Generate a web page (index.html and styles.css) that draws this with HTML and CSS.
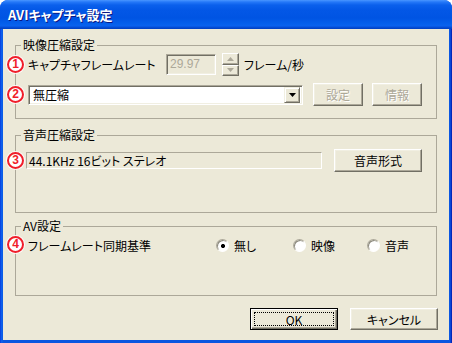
FILE: index.html
```html
<!DOCTYPE html>
<html lang="ja">
<head>
<meta charset="utf-8">
<title>AVIキャプチャ設定</title>
<link rel="stylesheet" href="styles.css">
</head>
<body>
<div class="window">
  <div class="titlebar"><span class="title">AVIキャプチャ設定</span></div>
  <div class="client">
    <fieldset class="group g1">
      <legend>映像圧縮設定</legend>
      <div class="row row1">
        <span class="mark">1</span>
        <span class="lbl-rate">キャプチャフレームレート</span>
        <div class="edit">29.97</div>
        <div class="spin">
          <div class="spin-btn"><svg width="7" height="4" viewBox="0 0 7 4"><path d="M3.5 0L7 4H0z" fill="#ACA899"/></svg></div>
          <div class="spin-btn"><svg width="7" height="4" viewBox="0 0 7 4"><path d="M0 0H7L3.5 4z" fill="#ACA899"/></svg></div>
        </div>
        <span class="unit">フレーム/秒</span>
      </div>
      <div class="row row2">
        <span class="mark">2</span>
        <div class="combo">
          <span class="combo-text">無圧縮</span>
          <span class="combo-btn"><svg width="7" height="4" viewBox="0 0 7 4"><path d="M0 0H7L3.5 4z" fill="#000"/></svg></span>
        </div>
        <button class="btn disabled b-set">設定</button>
        <button class="btn disabled b-info">情報</button>
      </div>
    </fieldset>

    <fieldset class="group g2">
      <legend>音声圧縮設定</legend>
      <div class="row row3">
        <span class="mark">3</span>
        <div class="static">44.1KHz 16ビット ステレオ</div>
        <button class="btn b-format">音声形式</button>
      </div>
    </fieldset>

    <fieldset class="group g3">
      <legend>AV設定</legend>
      <div class="row row4">
        <span class="mark">4</span>
        <span class="lbl-sync">フレームレート同期基準</span>
        <label class="opt o1"><span class="radio checked"></span>無し</label>
        <label class="opt o2"><span class="radio"></span>映像</label>
        <label class="opt o3"><span class="radio"></span>音声</label>
      </div>
    </fieldset>

    <div class="actions">
      <button class="btn default">OK</button>
      <button class="btn">キャンセル</button>
    </div>
  </div>
</div>
</body>
</html>
```

FILE: styles.css
```css
html, body {
  margin: 0;
  background: #ffffff;
}
body {
  font-family: "Noto Sans CJK JP", "Liberation Sans", sans-serif;
  font-size: 12px;
  color: #000;
  font-feature-settings: "palt";
}
.window {
  width: 452px;
  height: 343px;
  display: flex;
  flex-direction: column;
  background: linear-gradient(to right, #0831D9 0, #0C5BEA 1px, #0D62EE 2px, #0A56E0 3px, #0A56E0 449px, #0C58E4 450px, #0636C8 451px, #0019A8 452px);
  border-radius: 8px 8px 0 0;
  box-sizing: border-box;
}
.titlebar {
  height: 29px;
  flex: none;
  display: flex;
  align-items: center;
  padding: 0 0 0 8px;
  border-radius: 8px 8px 0 0;
  background: linear-gradient(180deg, #4A96FF 0, #2578F8 2px, #0B60EC 5px, #0357E6 10px, #0054E3 18px, #0560EC 24px, #0A62EE 26px, #0550DA 27px, #003FC0 29px);
}
.title {
  color: #fff;
  font-weight: bold;
  font-size: 13px;
  line-height: 16px;
  text-shadow: 1px 1px 0 #0A1883;
  margin-top: 1px;
}
.client {
  flex: 1;
  margin: 0 3px 3px;
  background: #ECE9D8;
  display: flex;
  flex-direction: column;
}
.group {
  margin: 9px 12px 0;
  padding: 1px 0 12px 12px;
  border: 1px solid #ACA899;
  min-width: 0;
}
.group legend {
  padding: 0 2px;
  margin-left: -7px;
  line-height: 14px;
  font-size: 12px;
}
.g2 { padding-top: 7px; padding-bottom: 40px; }
.g3 { margin-top: 6px; padding-top: 4px; padding-bottom: 42px; }

.row {
  display: flex;
  align-items: center;
  position: relative;
}
.row1, .row2, .row3 { height: 23px; }
.row2 { margin-top: 7px; }
.row4 { height: 16px; }

.mark {
  position: absolute;
  left: -21px;
  top: 50%;
  margin-top: -9px;
  width: 17px;
  height: 17px;
  box-sizing: border-box;
  border: 2px solid #F01E2A;
  border-radius: 50%;
  background: #fff;
  color: #F01E2A;
  font-family: "Liberation Sans", sans-serif;
  font-weight: bold;
  font-size: 12px;
  line-height: 13px;
  text-align: center;
  box-shadow: 0 0 0 1px rgba(255, 255, 255, 0.85);
}

.lbl-rate { width: 138px; flex: none; }
.edit {
  width: 50px;
  height: 21px;
  box-sizing: border-box;
  border: 1px solid;
  border-color: #ACA899 #fff #fff #ACA899;
  box-shadow: inset 1px 1px 0 #716F64, inset -1px -1px 0 #F1EFE2;
  color: #ACA899;
  padding: 0 0 0 3px;
  line-height: 19px;
  font-family: "Liberation Sans", sans-serif;
  font-size: 12px;
}
.spin {
  margin-left: 6px;
  width: 17px;
  height: 23px;
  display: flex;
  flex-direction: column;
}
.spin-btn {
  flex: 1;
  box-sizing: border-box;
  border: 1px solid;
  border-color: #fff #716F64 #716F64 #fff;
  box-shadow: inset -1px -1px 0 #ACA899;
  background: #ECE9D8;
  display: flex;
  align-items: center;
  justify-content: center;
}
.unit { margin-left: 5px; }

.combo {
  width: 275px;
  height: 20px;
  box-sizing: border-box;
  border: 1px solid;
  border-color: #ACA899 #fff #fff #ACA899;
  box-shadow: inset 1px 1px 0 #716F64, inset -1px -1px 0 #F1EFE2;
  background: #fff;
  display: flex;
  align-items: center;
  padding: 1px 2px 1px 2px;
}
.combo-text { flex: 1; padding-left: 2px; line-height: 16px; }
.combo-btn {
  width: 16px;
  height: 16px;
  box-sizing: border-box;
  border: 1px solid;
  border-color: #F1EFE2 #716F64 #716F64 #F1EFE2;
  box-shadow: inset 1px 1px 0 #fff, inset -1px -1px 0 #ACA899;
  background: #ECE9D8;
  display: flex;
  align-items: center;
  justify-content: center;
}

.btn {
  height: 23px;
  box-sizing: border-box;
  border: 1px solid;
  border-color: #fff #716F64 #716F64 #fff;
  box-shadow: inset -1px -1px 0 #ACA899, inset 1px 1px 0 #F1EFE2;
  background: #ECE9D8;
  font-family: inherit;
  font-size: 12px;
  font-feature-settings: "palt";
  color: #000;
  padding: 0;
  margin: 0;
  line-height: 20px;
}
.btn.disabled {
  color: #ACA899;
  text-shadow: 1px 1px 0 #fff;
}
.b-set { width: 50px; margin-left: 10px; }
.b-info { width: 50px; margin-left: 9px; }

.static {
  margin-left: -2px;
  width: 296px;
  height: 17px;
  box-sizing: border-box;
  border: 1px solid;
  border-color: #ACA899 #fff #fff #ACA899;
  padding-left: 2px;
  line-height: 15px;
  white-space: nowrap;
}
.b-format { width: 88px; margin-left: 12px; }

.lbl-sync { width: 188px; flex: none; }
.opt {
  display: flex;
  align-items: center;
  flex: none;
}
.o1 { width: 77px; }
.o2 { width: 74px; }
.radio {
  width: 13px;
  height: 13px;
  box-sizing: border-box;
  border-radius: 50%;
  border: 1px solid;
  border-color: #ACA899 #fff #fff #ACA899;
  box-shadow: inset 1px 1px 0 #8C8A7E;
  background: #fff;
  margin-right: 5px;
  flex: none;
}
.radio.checked {
  background: radial-gradient(circle at 6px 6px, #000 0, #000 1.6px, #fff 2.4px);
}

.actions {
  display: flex;
  justify-content: flex-end;
  gap: 12px;
  margin-top: 12px;
  padding-right: 11px;
}
.actions .btn {
  width: 88px;
  height: 22px;
  line-height: 19px;
}
.btn.default {
  border: 1px solid #000;
  box-shadow: inset 1px 1px 0 #fff, inset -1px -1px 0 #716F64, inset -2px -2px 0 #ACA899;
  outline: 1px dotted #000;
  outline-offset: -5px;
}
```
